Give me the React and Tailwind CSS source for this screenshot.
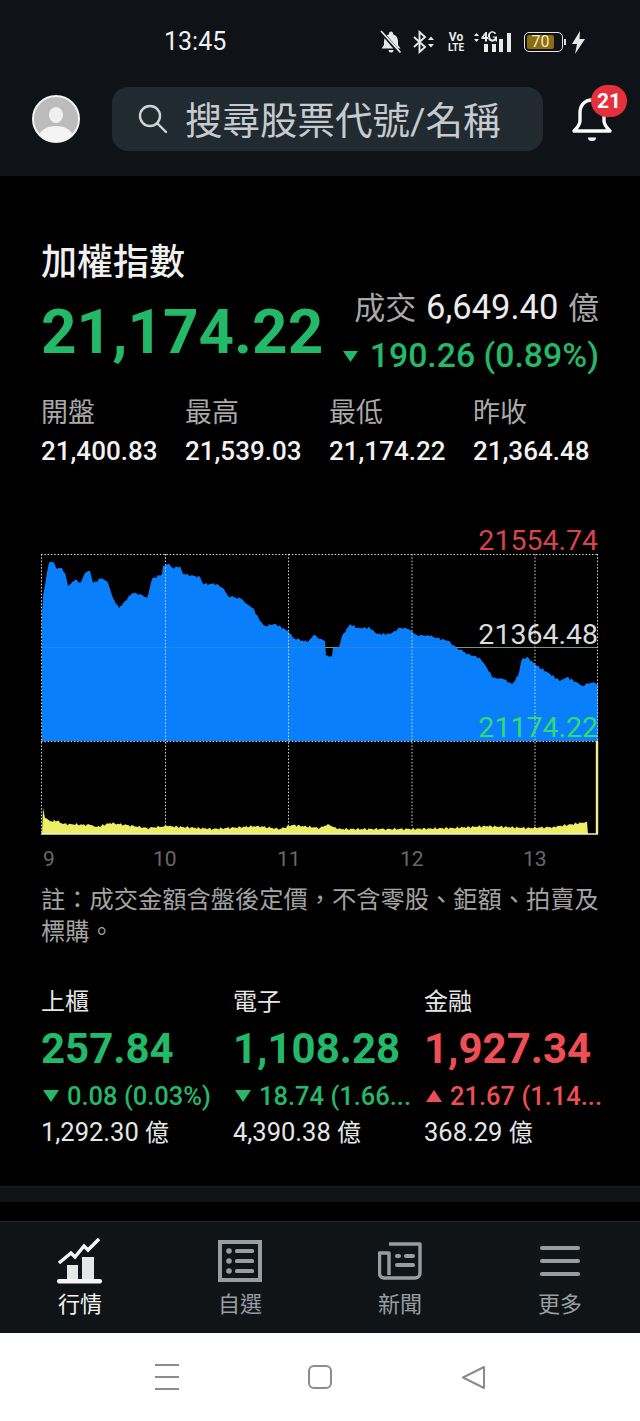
import React from "react";

const SANS = { fontFamily: 'Roboto, "Noto Sans CJK TC", sans-serif' };

const priceOutline = [[42,612],[43.3,593],[46.7,573],[49,562],[53,561],[57,568],[62,567],[65,572],[68,585],[75,579],[80,582],[85,572],[90,570],[93,582],[102,577],[108,582],[113,597],[119,607],[125,600],[132,592],[140,593],[147,597],[152,578],[162,573],[163,565],[168,563],[173,567],[180,565],[183,573],[200,576],[203,583],[217,583],[224,588],[228,595],[242,598],[247,603],[253,607],[260,620],[265,625],[275,623],[288,630],[293,637],[307,641],[315,634],[320,638],[325,640],[326,655],[332,655],[333,647],[339,646],[342,635],[350,623],[357,627],[370,627],[377,633],[390,633],[400,627],[408,628],[417,634],[430,635],[448,640],[457,647],[468,653],[480,657],[487,667],[493,677],[503,678],[512,683],[518,675],[522,658],[527,656],[537,665],[550,673],[560,680],[567,676],[583,685],[587,682],[598,682]];
const volumeOutline = [[43,807],[45,817],[50,820],[57,820],[63,823],[90,824],[97,826],[110,822],[127,824],[147,827],[167,825],[213,828],[257,825],[280,828],[292,824],[320,827],[328,823],[337,828],[387,828],[410,828],[453,827],[487,825],[527,827],[553,826],[587,821]];

function jagged(points, amp) {
  const out = [];
  for (let i = 0; i < points.length - 1; i++) {
    const [x0, y0] = points[i];
    const [x1, y1] = points[i + 1];
    const steps = Math.max(1, Math.round((x1 - x0) / 1.5));
    for (let s = 0; s < steps; s++) {
      const x = x0 + ((x1 - x0) * s) / steps;
      const y = y0 + ((y1 - y0) * s) / steps;
      const j = s === 0 ? 0 : (Math.sin(x * 1.7) + Math.sin(x * 3.1)) * amp;
      out.push(`${x.toFixed(1)},${(y + j).toFixed(1)}`);
    }
  }
  const last = points[points.length - 1];
  out.push(`${last[0]},${last[1]}`);
  return out.join(" ");
}

function Chart() {
  const grid = "#d8d8d8";
  return (
    <div className="relative mt-[84px] ml-[40px] w-[560px] h-[284px]">
      <svg className="block" width="560" height="284" viewBox="40 552 560 284">
        <line x1="42" x2="598" y1="646.5" y2="646.5" stroke="#6f9a8c" />
        <polygon points={`42,740 ${jagged(priceOutline, 0.7)} 598,740`} fill="#0a7ffb" />
        <polygon points={`42,833 ${jagged(volumeOutline, 0.7)} 588,833`} fill="#eded66" />
        <line x1="42" x2="598" y1="646.5" y2="646.5" stroke="#6f9a8c" strokeOpacity="0.25" />
        <g stroke={grid} strokeDasharray="1.5 1.8" strokeWidth="1" fill="none">
          <line x1="41" x2="598" y1="553.5" y2="553.5" />
          <line x1="41" x2="598" y1="740.5" y2="740.5" />
          <line x1="41.5" x2="41.5" y1="553" y2="833" />
          <line x1="165.5" x2="165.5" y1="553" y2="825" />
          <line x1="288.5" x2="288.5" y1="553" y2="825" />
          <line x1="412" x2="412" y1="553" y2="825" />
          <line x1="535" x2="535" y1="553" y2="825" />
          <line x1="597.5" x2="597.5" y1="553" y2="740" />
        </g>
        <line x1="41" x2="598" y1="833" y2="833" stroke="#f2f2c8" strokeWidth="1.6" />
        <line x1="597" x2="597" y1="740" y2="833" stroke="#f0f08a" strokeWidth="2.4" />
      </svg>
      <span className="absolute right-[2px] top-[-27px] text-[28.500px] leading-[30px] text-[#d8434c]">21554.74</span>
      <span className="absolute right-[2px] top-[67px] text-[28.500px] leading-[30px] text-[#dcdcdc]">21364.48</span>
      <span className="absolute right-[2px] top-[160px] text-[28.500px] leading-[30px] text-[#2fdc6e]">21174.22</span>
    </div>
  );
}

function BellOff() {
  return (
    <svg width="22" height="24" viewBox="0 0 22 24" fill="#e8e8e8">
      <path d="M11 1.500a2 2 0 0 1 2 2v.8c3.200.9 5 3.700 5 7v3.700l2.500 3.500H1.500L4 15v-3.700c0-3.300 1.800-6.100 5-7v-.8a2 2 0 0 1 2-2z" />
      <path d="M8.500 20h5a2.500 2.500 0 0 1-5 0z" />
      <path d="M1 1.500 19.500 23" stroke="#101418" strokeWidth="3.600" />
      <path d="M1 1 20.500 22.500" stroke="#e8e8e8" strokeWidth="1.800" />
    </svg>
  );
}

function StatusIcons() {
  return (
    <div className="flex items-center text-[#eaeaea] ml-[154px]">
      <BellOff />
      <svg className="ml-[10px]" width="24" height="24" viewBox="0 0 24 24" fill="none" stroke="#e8e8e8" strokeWidth="1.900">
        <path d="M2 7l11 10-5.500 5V2L13 7 2 17" />
        <path d="M16 10l3-3.500 3 3.500zM16 14l3 3.500 3-3.500z" fill="#e8e8e8" stroke="none" />
      </svg>
      <div className="ml-[12px] w-[16px] flex flex-col items-center font-bold">
        <span className="text-[12px] leading-[11px]">Vo</span>
        <span className="text-[10px] leading-[10px]">LTE</span>
      </div>
      <svg className="ml-[9px]" width="40" height="24" viewBox="0 0 40 24" fill="#eaeaea">
        <path d="M1 6l2.500-3L6 6zM1 9l2.500 3L6 9z" />
        <path d="M8.500 9V7l4-5h1.500v5h1.500v2H14v2.500h-2V9zm2-2H12V5zM23 4h-1.500a2 2 0 0 0-.8-1.100 3 3 0 0 0-1.200-.3c-1.800 0-2.500 1.400-2.500 3.400s.8 3.400 2.500 3.400c1.300 0 2.200-.7 2.300-2h-2V6.500H24v5h-1.500v-1.200c-.6.900-1.700 1.400-3 1.400-3 0-4.600-2.300-4.600-5.200S16.500 1.200 19.500 1.200c2 0 3.300 1 3.500 2.800z" fillRule="evenodd" />
        <rect x="11" y="14" width="4" height="8" />
        <rect x="19" y="14" width="4" height="8" />
        <rect x="26" y="9" width="4" height="13" />
        <rect x="34" y="3" width="4" height="19" />
      </svg>
      <div className="ml-[11px] w-[39px] h-[20px] rounded-[5px] border-[1.500px] border-[#e4e4e4] p-[2px]">
        <div className="w-[27px] h-full rounded-[2px] bg-[#8a6d14] flex items-center justify-center text-[16px] leading-none text-[#f4e9b8]">70</div>
      </div>
      <div className="w-[2px] h-[6px] ml-[1px] bg-[#ddd]" />
      <svg className="ml-[6px]" width="13" height="23" viewBox="0 0 13 23" fill="#e8e8e8">
        <path d="M8 0 0 13h5l-2 10 10-15H7.500z" />
      </svg>
    </div>
  );
}

function Header() {
  return (
    <header className="h-[176px] bg-[#0f1317] flex flex-col">
      <div className="h-[87px] flex items-start pt-[30px] pl-[164px]">
        <span className="text-[25px] leading-[24px] text-[#f0f0f0] w-[62px] whitespace-nowrap">13:45</span>
        <StatusIcons />
      </div>
      <div className="flex items-center h-[64px] pl-[32px]">
        <svg width="48" height="48" viewBox="0 0 48 48" className="shrink-0">
          <defs>
            <clipPath id="av"><circle cx="24" cy="24" r="22.500" /></clipPath>
          </defs>
          <circle cx="24" cy="24" r="23" fill="#bcbcbc" stroke="#f2f2f2" strokeWidth="2" />
          <g clipPath="url(#av)">
            <ellipse cx="24" cy="20" rx="7" ry="8" fill="#f0f0f0" />
            <ellipse cx="24" cy="42" rx="17" ry="11" fill="#f4f4f4" />
          </g>
        </svg>
        <div className="ml-[32px] w-[431px] h-[64px] rounded-[16px] bg-[#222a31] flex items-center pl-[25px]">
          <svg width="32" height="32" viewBox="0 0 32 32" fill="none" stroke="#cfd3d7" strokeWidth="2.400" strokeLinecap="round">
            <circle cx="13" cy="13" r="10" />
            <path d="M20.500 20.500 29 29" />
          </svg>
          <span className="ml-[16px] mt-[3px] text-[37.500px] leading-[60px] text-[#c6cbd0] whitespace-nowrap">搜尋股票代號/名稱</span>
        </div>
        <div className="relative ml-[28px] w-[42px] h-[46px]">
          <svg width="42" height="46" viewBox="0 0 42 46" fill="none" stroke="#fafafa" strokeWidth="3.400" strokeLinejoin="round">
            <path d="M21 4c-7.500 0-12 5.500-12 13v8c0 3-2 6-6 10h36c-4-4-6-7-6-10v-8c0-7.500-4.500-13-12-13z" />
            <path d="M17 41.500a4 3.500 0 0 0 8 0z" fill="#fafafa" stroke="none" />
          </svg>
          <span className="absolute left-[20px] top-[-11px] w-[36px] h-[32px] rounded-full bg-[#e62f3d] flex items-center justify-center text-[21px] leading-none font-bold text-white">21</span>
        </div>
      </div>
    </header>
  );
}

function Stat({ label, value }) {
  return (
    <div className="w-[144px] shrink-0">
      <div className="text-[27px] leading-[38px] text-[#a9a9a9]">{label}</div>
      <div className="mt-[1px] text-[26px] leading-[36px] font-medium text-[#f2f2f2] whitespace-nowrap">{value}</div>
    </div>
  );
}

function Market({ name, price, change, volume, color, up, width }) {
  return (
    <div className={width}>
      <div className="text-[24px] leading-[34px] text-[#e6e6e6]">{name}</div>
      <div className="mt-[5px] text-[42px] leading-[50px] font-bold whitespace-nowrap" style={{ color }}>{price}</div>
      <div className="mt-[4px] flex items-center text-[25.500px] leading-[36px] font-medium whitespace-nowrap" style={{ color }}>
        <svg width="16" height="12" viewBox="0 0 16 12" className="mr-[8px] ml-[2px] shrink-0" fill={color}>
          <path d={up ? "M8 0 16 12H0z" : "M8 12 0 0h16z"} />
        </svg>
        {change}
      </div>
      <div className="text-[25.500px] leading-[36px] text-[#e6e6e6] whitespace-nowrap">{volume} <span className="text-[24px]">億</span></div>
    </div>
  );
}

function NavItem({ label, color, children }) {
  return (
    <div className="w-[160px] flex flex-col items-center">
      <div className="h-[58px] flex items-center justify-center">{children}</div>
      <div className="text-[22px] leading-[30px]" style={{ color }}>{label}</div>
    </div>
  );
}

function BottomNav() {
  const gray = "#989da2";
  return (
    <nav className="h-[112px] bg-[#101417] border-t border-[#24282b] flex items-start pt-[10px]">
      <NavItem label="行情" color="#f5f5f5">
        <svg width="46" height="46" viewBox="0 0 46 46" fill="#f5f5f5">
          <path d="M2 25 14 15l4 4 9-11 4 4L42 1" fill="none" stroke="#f5f5f5" strokeWidth="3.500" />
          <path d="M10 27h11v14H10z" fill="#e6e6e6" />
          <path d="M25 19h12v22H25z" fill="#e6e6e6" />
          <rect x="0" y="41" width="45" height="4.500" rx="2" />
        </svg>
      </NavItem>
      <NavItem label="自選" color={gray}>
        <svg width="44" height="42" viewBox="0 0 44 42" fill={gray}>
          <rect x="2" y="2" width="40" height="38" fill="none" stroke={gray} strokeWidth="4" />
          <circle cx="11" cy="11" r="2.800" />
          <circle cx="11" cy="21" r="2.800" />
          <circle cx="11" cy="31" r="2.800" />
          <rect x="17" y="9" width="19" height="4" rx="1.500" />
          <rect x="17" y="19" width="19" height="4" rx="1.500" />
          <rect x="17" y="29" width="19" height="4" rx="1.500" />
        </svg>
      </NavItem>
      <NavItem label="新聞" color={gray}>
        <svg width="44" height="38" viewBox="0 0 44 38" fill="none" stroke={gray} strokeWidth="3.400" strokeLinejoin="round">
          <path d="M11 2h31v29a5 5 0 0 1-5 5H6a4.500 4.500 0 0 1-4.500-4.500V11H11v22" />
          <g fill={gray} stroke="none">
            <rect x="17" y="12" width="6" height="4" rx="2" />
            <rect x="26" y="12" width="11" height="4" rx="2" />
            <rect x="17" y="21" width="20" height="4" rx="2" />
          </g>
        </svg>
      </NavItem>
      <NavItem label="更多" color={gray}>
        <div className="w-[40px] flex flex-col gap-[9px]">
          <div className="h-[4px] rounded-full bg-[#989da2]" />
          <div className="h-[4px] rounded-full bg-[#989da2]" />
          <div className="h-[4px] rounded-full bg-[#989da2]" />
        </div>
      </NavItem>
    </nav>
  );
}

function SystemBar() {
  return (
    <div className="flex-1 bg-white flex items-center pl-[155px]">
      <div className="w-[24px] flex flex-col gap-[10px]">
        <div className="h-[2px] bg-[#8c8c8c]" />
        <div className="h-[2px] bg-[#8c8c8c]" />
        <div className="h-[2px] bg-[#8c8c8c]" />
      </div>
      <div className="ml-[129px] w-[24px] h-[24px] rounded-[6px] border-2 border-[#8c8c8c]" />
      <svg className="ml-[129px]" width="25" height="25" viewBox="0 0 25 25" fill="none" stroke="#8c8c8c" strokeWidth="2" strokeLinejoin="round">
        <path d="M23 2v21L2 12.500z" />
      </svg>
    </div>
  );
}

export default function App() {
  const green = "#24b869";
  return (
    <div className="w-[640px] h-[1421px] bg-black flex flex-col overflow-hidden" style={SANS}>
      <Header />
      <main className="flex-1 bg-black flex flex-col">
        <section className="pl-[41px] pt-[64px]">
          <h1 className="text-[36px] leading-[46px] font-medium text-[#f0f0f0]">加權指數</h1>
          <div className="flex justify-between pr-[41px]">
            <div className="text-[62px] leading-[68px] font-bold whitespace-nowrap mt-[12px]" style={{ color: green }}>21,174.22</div>
            <div className="flex flex-col items-end mt-[-1px]">
              <div className="text-[31px] leading-[44px] text-[#a8a8a8] whitespace-nowrap">
                成交 <span className="text-[#ececec] text-[34.500px] mx-[2px]">6,649.40</span> 億
              </div>
              <div className="flex items-center text-[33.800px] leading-[44px] font-medium whitespace-nowrap mt-[3px]" style={{ color: green }}>
                <svg width="15" height="11" viewBox="0 0 15 11" className="mr-[12px]" fill={green}><path d="M7.500 11 0 0h15z" /></svg>
                190.26 (0.89%)
              </div>
            </div>
          </div>
          <div className="flex mt-[16px]">
            <Stat label="開盤" value="21,400.83" />
            <Stat label="最高" value="21,539.03" />
            <Stat label="最低" value="21,174.22" />
            <Stat label="昨收" value="21,364.48" />
          </div>
        </section>
        <Chart />
        <div className="relative h-[36px] mt-[4px] text-[21px] leading-[36px] text-[#686868]">
          <span className="absolute left-[43px]">9</span>
          <span className="absolute left-[153px]">10</span>
          <span className="absolute left-[277px]">11</span>
          <span className="absolute left-[400px]">12</span>
          <span className="absolute left-[523px]">13</span>
        </div>
        <p className="ml-[41px] mt-[7px] text-[24.250px] leading-[32px] text-[#a3a3a3] w-[560px]">註：成交金額含盤後定價，不含零股、鉅額、拍賣及標購。</p>
        <div className="flex pl-[41px] mt-[37px]">
          <Market width="w-[192px]" name="上櫃" price="257.84" change="0.08 (0.03%)" volume="1,292.30" color="#24b869" />
          <Market width="w-[191px]" name="電子" price="1,108.28" change="18.74 (1.66..." volume="4,390.38" color="#24b869" />
          <Market width="w-[176px]" name="金融" price="1,927.34" change="21.67 (1.14..." volume="368.29" color="#ee4f55" up />
        </div>
        <div className="mt-[35px] h-[16px] bg-[#101416] border-t border-[#1a1e20]" />
        <div className="flex-1 bg-black" />
      </main>
      <BottomNav />
      <div className="h-[88px] flex"><SystemBar /></div>
    </div>
  );
}
